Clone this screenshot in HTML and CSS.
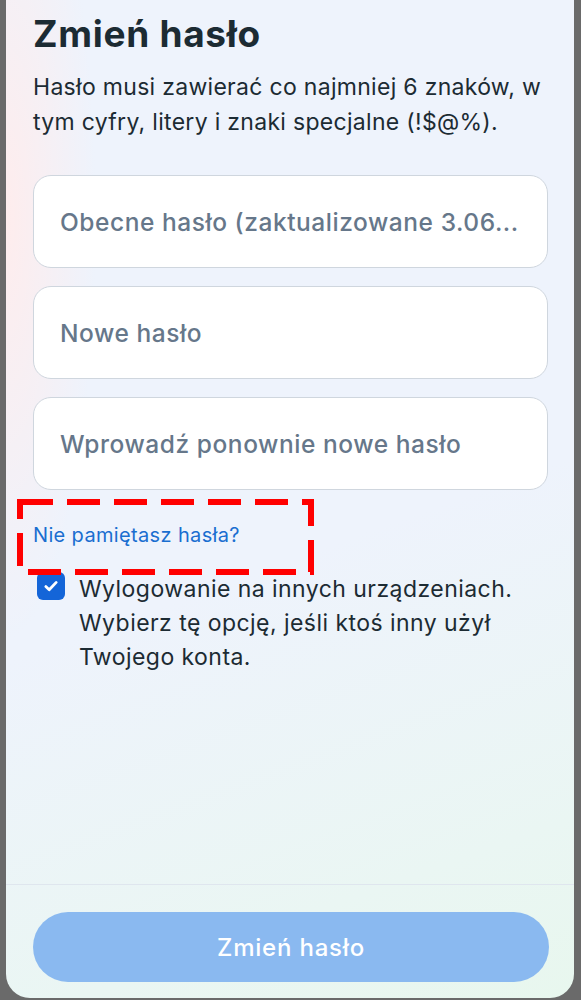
FILE: index.html
```html
<!DOCTYPE html>
<html lang="pl">
<head>
<meta charset="utf-8">
<title>Zmień hasło</title>
<link rel="stylesheet" href="styles.css">
</head>
<body>
<div class="card">
  <div class="content">
    <h1 class="title">Zmień hasło</h1>
    <p class="desc">Hasło musi zawierać co najmniej 6 znaków, w tym cyfry, litery i znaki specjalne (!$@%).</p>
    <div class="fields">
      <div class="field"><span class="ph">Obecne hasło (zaktualizowane 3.06...</span></div>
      <div class="field"><span class="ph">Nowe hasło</span></div>
      <div class="field"><span class="ph">Wprowadź ponownie nowe hasło</span></div>
    </div>
    <div class="forgot-wrap">
      <a class="forgot">Nie pamiętasz hasła?</a>
      <svg class="annot" width="297" height="76" viewBox="0 0 297 76">
        <rect x="3" y="3" width="291" height="70" fill="none" stroke="#ff0000" stroke-width="6" stroke-dasharray="33 14"/>
      </svg>
    </div>
    <div class="check-row">
      <span class="checkbox">
        <svg width="18" height="18" viewBox="0 0 18 18"><path d="M3.8 9.6l3.4 3.2L14.2 5.4" fill="none" stroke="#fff" stroke-width="2.8" stroke-linecap="round" stroke-linejoin="round"/></svg>
      </span>
      <span class="check-text">Wylogowanie na innych urządzeniach. Wybierz tę opcję, jeśli ktoś inny użył Twojego konta.</span>
    </div>
  </div>
  <div class="footer">
    <button class="btn">Zmień hasło</button>
  </div>
</div>
</body>
</html>
```
FILE: styles.css
```css
html, body {
  margin: 0;
  padding: 0;
}
body {
  background: #6a6a6a;
  height: 1000px;
  overflow: hidden;
  font-family: Inter, "Noto Sans", sans-serif;
}
.card {
  margin: 0 7px 0 6px;
  height: 998px;
  border-radius: 0 0 24px 24px;
  background:
    radial-gradient(ellipse 90px 420px at 0 220px, rgba(255,236,236,0.95), rgba(255,240,240,0)),
    linear-gradient(160deg, #eef3fc 0%, #eef3fc 55%, #eaf6f3 85%, #e8f7ee 100%);
  display: flex;
  flex-direction: column;
  overflow: hidden;
}
.content {
  padding: 0 26px 0 27px;
  flex: 1;
}
.title {
  margin: 12px 0 0;
  font-size: 37px;
  font-weight: 700;
  color: #1c2b33;
  line-height: 44px;
  letter-spacing: 0.7px;
}
.desc {
  margin: 14px 0 0;
  font-size: 23px;
  line-height: 35px;
  letter-spacing: 0.3px;
  color: #1c2b33;
}
.fields {
  margin-top: 35px;
  display: flex;
  flex-direction: column;
  gap: 18px;
}
.field {
  height: 91px;
  border: 1px solid #cfd6de;
  border-radius: 18px;
  background: #fff;
  display: flex;
  align-items: center;
  padding: 0 24px 0 26px;
  overflow: hidden;
}
.ph {
  font-size: 24.5px;
  font-weight: 500;
  letter-spacing: 0.55px;
  color: #66778a;
  white-space: nowrap;
}
.forgot-wrap {
  position: relative;
  margin-top: 30px;
  height: 30px;
  display: flex;
  align-items: center;
}
.forgot {
  font-size: 20px;
  letter-spacing: 0.35px;
  color: #1a6ed0;
  font-weight: 400;
}
.annot {
  position: absolute;
  left: -16px;
  top: -21px;
}
.check-row {
  margin-top: 22px;
  display: flex;
  gap: 14px;
  padding-left: 4px;
}
.checkbox {
  flex: none;
  width: 28px;
  height: 28px;
  border-radius: 6px;
  background: #1465d8;
  display: flex;
  align-items: center;
  justify-content: center;
}
.check-text {
  font-size: 23px;
  line-height: 34px;
  letter-spacing: 0.45px;
  color: #1c2b33;
}
.footer {
  border-top: 1px solid #dfe6ee;
  padding: 27px 25px 16px 27px;
}
.btn {
  display: block;
  width: 100%;
  height: 70px;
  border: none;
  border-radius: 35px;
  background: #8ab9f0;
  color: #fff;
  font-family: Inter, "Noto Sans", sans-serif;
  font-size: 24px;
  letter-spacing: 0.8px;
  font-weight: 500;
}
```
